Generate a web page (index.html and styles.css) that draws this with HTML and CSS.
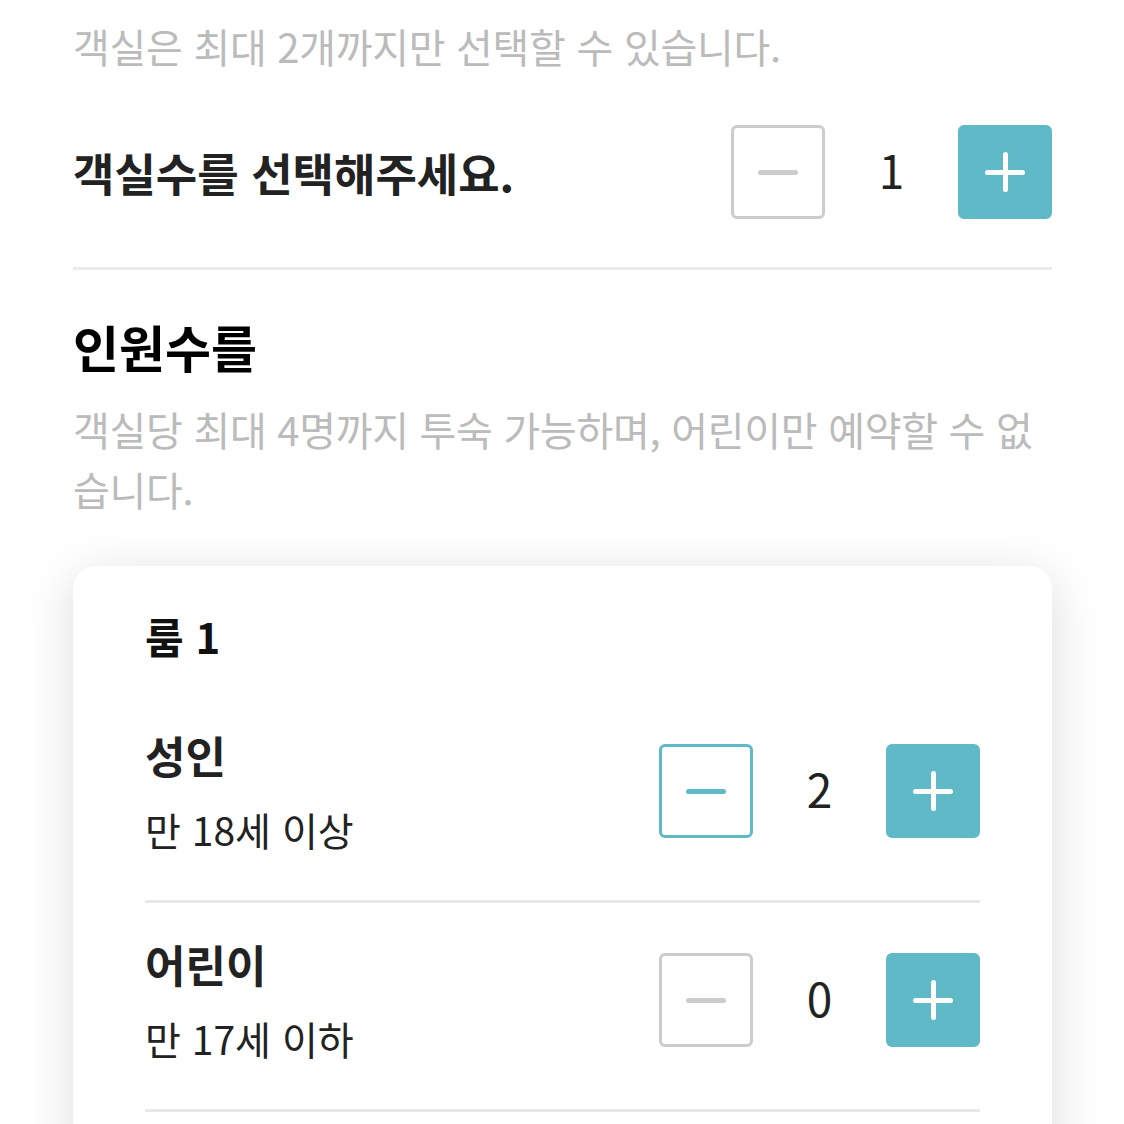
FILE: index.html
```html
<!DOCTYPE html>
<html lang="ko">
<head>
  <meta charset="UTF-8" />
  <meta name="viewport" content="width=device-width, initial-scale=1.0"/>
  <title>객실 및 인원 선택</title>
  <link rel="stylesheet" href="styles.css">
</head>
<body>
  <div class="page">
    <p class="hint">객실은 최대 2개까지만 선택할 수 있습니다.</p>

    <div class="room-count">
      <h2 class="title">객실수를 선택해주세요.</h2>
      <div class="stepper">
        <button class="step minus" disabled><span class="bar"></span></button>
        <span class="value">1</span>
        <button class="step plus"><span class="bar"></span><span class="bar vert"></span></button>
      </div>
    </div>

    <h2 class="section-title">인원수를</h2>
    <p class="hint wrap">객실당 최대 4명까지 투숙 가능하며, 어린이만 예약할 수 없습니다.</p>

    <div class="card">
      <h3 class="room-name">룸 1</h3>

      <div class="guest-row">
        <div class="label">
          <div class="label-name">성인</div>
          <div class="label-sub">만 18세 이상</div>
        </div>
        <div class="stepper">
          <button class="step minus active"><span class="bar"></span></button>
          <span class="value">2</span>
          <button class="step plus"><span class="bar"></span><span class="bar vert"></span></button>
        </div>
      </div>

      <div class="guest-row">
        <div class="label">
          <div class="label-name">어린이</div>
          <div class="label-sub">만 17세 이하</div>
        </div>
        <div class="stepper">
          <button class="step minus" disabled><span class="bar"></span></button>
          <span class="value">0</span>
          <button class="step plus"><span class="bar"></span><span class="bar vert"></span></button>
        </div>
      </div>
    </div>
  </div>
</body>
</html>
```

FILE: styles.css
```css
* {
  margin: 0;
  padding: 0;
  box-sizing: border-box;
  font-family: 'Noto Sans CJK KR', 'Noto Sans', sans-serif;
}

body {
  background-color: #fff;
  color: #222;
  overflow: hidden;
}

.page {
  padding: 16px 72px 0 73px;
}

.hint {
  font-size: 40px;
  line-height: 60px;
  color: #bbb;
  letter-spacing: -0.3px;
}

.room-count {
  display: flex;
  align-items: center;
  justify-content: space-between;
  margin-top: 49px;
  padding-bottom: 48px;
  border-bottom: 3px solid #ebebeb;
}

.title {
  font-size: 45px;
  font-weight: 700;
  color: #222;
}

.section-title {
  margin-top: 46px;
  font-size: 50px;
  line-height: 60px;
  font-weight: 700;
  color: #000;
}

.hint.wrap {
  margin-top: 23px;
}

/* stepper */
.stepper {
  display: flex;
  align-items: center;
}

.step {
  position: relative;
  width: 94px;
  height: 94px;
  border: 3px solid #ccc;
  border-radius: 6px;
  background: #fff;
}

.step .bar {
  position: absolute;
  left: 50%;
  top: 50%;
  width: 40px;
  height: 5px;
  margin: -2px 0 0 -20px;
  border-radius: 3px;
  background: #ccc;
}

.step .bar.vert {
  width: 5px;
  height: 40px;
  margin: -20px 0 0 -2px;
}

.step.active {
  border-color: #60b9c7;
}

.step.active .bar {
  background: #60b9c7;
}

.step.plus {
  border-color: #60b9c7;
  background: #60b9c7;
}

.step.plus .bar {
  background: #fff;
}

.value {
  width: 133px;
  padding-bottom: 6px;
  text-align: center;
  font-size: 46px;
  color: #222;
}

/* card */
.card {
  margin-top: 47px;
  padding: 44px 72px 0;
  background: #fff;
  border-radius: 22px;
  box-shadow: 0 10px 50px rgba(0, 0, 0, 0.14);
  height: 700px;
}

.room-name {
  font-size: 42px;
  line-height: 52px;
  font-weight: 700;
  color: #111;
  margin-bottom: 33px;
}

.guest-row {
  display: flex;
  align-items: center;
  justify-content: space-between;
  padding: 32px 0 45px;
  border-bottom: 3px solid #e8e8e8;
}

.guest-row + .guest-row {
  padding-top: 33px;
}

.label-name {
  font-size: 44px;
  line-height: 56px;
  font-weight: 700;
  color: #222;
}

.label-sub {
  margin-top: 20px;
  font-size: 39px;
  line-height: 52px;
  color: #222;
}
```
